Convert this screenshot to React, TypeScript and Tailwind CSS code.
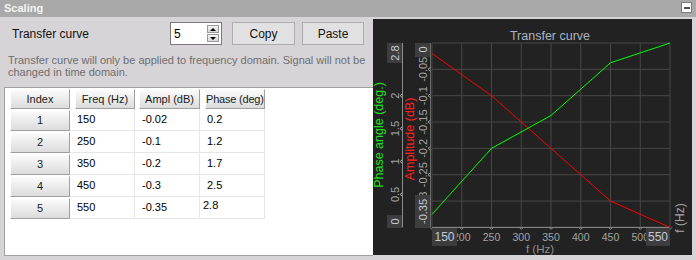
import React from "react";

const rows = [
  { i: 1, f: "150", a: "-0.02", p: "0.2" },
  { i: 2, f: "250", a: "-0.1", p: "1.2" },
  { i: 3, f: "350", a: "-0.2", p: "1.7" },
  { i: 4, f: "450", a: "-0.3", p: "2.5" },
  { i: 5, f: "550", a: "-0.35", p: "2.8" },
];

const freqs = [150, 250, 350, 450, 550];
const ampl = [-0.02, -0.1, -0.2, -0.3, -0.35];
const phase = [0.2, 1.2, 1.7, 2.5, 2.8];

// chart mapping (svg coords, panel origin at page 373,19)
const fx = (f: number) => 59 + (f - 150) * 0.595;
const ya = (a: number) => 24 + (-a / 0.35) * 184.4;
const yp = (p: number) => 208.4 - (p / 2.8) * 184.4;

function VText({ x, y, children, fill, size = 11 }: { x: number; y: number; children: React.ReactNode; fill: string; size?: number }) {
  return (
    <text
      x={0}
      y={0}
      transform={`translate(${x} ${y}) rotate(-90)`}
      textAnchor="middle"
      dominantBaseline="central"
      fill={fill}
      fontSize={size}
    >
      {children}
    </text>
  );
}

function Chart() {
  const gridX = [150, 200, 250, 300, 350, 400, 450, 500, 550];
  const gridY = [0, -0.05, -0.1, -0.15, -0.2, -0.25, -0.3, -0.35];
  const red = freqs.map((f, i) => `${fx(f)},${ya(ampl[i])}`).join(" ");
  const green = freqs.map((f, i) => `${fx(f)},${yp(phase[i])}`).join(" ");
  const label = "#a4a4a4";
  const boxText = "#c4ccd8";
  const box = "#3d3d3d";

  return (
    <svg width={319} height={236} className="block font-['Liberation_Sans',sans-serif]">
      <rect width={319} height={236} fill="#222222" />
      <text x={177} y={17} textAnchor="middle" dominantBaseline="central" fill="#aab4c4" fontSize={12.5}>
        Transfer curve
      </text>

      {/* grid */}
      {gridX.map((f) => (
        <g key={f}>
          <line x1={fx(f)} x2={fx(f)} y1={24} y2={208.4} stroke="#474747" />
          <path d={`M${fx(f) - 2},208.4 L${fx(f)},210.5 L${fx(f) + 2},208.4`} stroke="#8a8a8a" fill="none" />
        </g>
      ))}
      {gridY.map((a) => (
        <line key={a} x1={59} x2={297} y1={ya(a)} y2={ya(a)} stroke="#474747" />
      ))}

      {/* axis lines */}
      <line x1={29.5} x2={29.5} y1={24} y2={208.4} stroke="#8c8c8c" />
      <line x1={57.5} x2={57.5} y1={24} y2={208.4} stroke="#6a6a6a" />
      <line x1={59} x2={297} y1={208.4} y2={208.4} stroke="#8c8c8c" />
      {[0.5, 1, 1.5, 2].map((p) => (
        <path key={p} d={`M29.5,${yp(p) - 2} L27,${yp(p)} L29.5,${yp(p) + 2}`} stroke="#a0a0a0" fill="none" />
      ))}
      {[-0.05, -0.1, -0.15, -0.2, -0.25, -0.3].map((a) => (
        <path key={a} d={`M57.5,${ya(a) - 2} L55,${ya(a)} L57.5,${ya(a) + 2}`} stroke="#a0a0a0" fill="none" />
      ))}

      {/* phase axis labels */}
      <VText x={6} y={116} fill="#1ee01e" size={12.5}>
        Phase angle (deg.)
      </VText>
      {[
        [0.5, "0.5"],
        [1, "1"],
        [1.5, "1.5"],
        [2, "2"],
      ].map(([p, t]) => (
        <VText key={t as string} x={22} y={yp(p as number)} fill={label}>
          {t}
        </VText>
      ))}
      <rect x={14} y={24} width={15} height={20} fill={box} />
      <VText x={22} y={34} fill={boxText}>
        2.8
      </VText>
      <rect x={14} y={196} width={15} height={13} fill={box} />
      <VText x={22} y={202.5} fill={boxText}>
        0
      </VText>

      {/* amplitude axis labels */}
      <VText x={37} y={120} fill="#ff2020" size={12.5}>
        Amplitude (dB)
      </VText>
      {[
        [-0.05, "-0.05"],
        [-0.1, "-0.1"],
        [-0.15, "-0.15"],
        [-0.2, "-0.2"],
        [-0.25, "-0.25"],
        [-0.3, "-0.3"],
      ].map(([a, t]) => (
        <VText key={t as string} x={50} y={ya(a as number)} fill={label}>
          {t}
        </VText>
      ))}
      <rect x={42} y={24} width={15} height={14} fill={box} />
      <VText x={50} y={30.5} fill={boxText}>
        0
      </VText>
      <rect x={42} y={176} width={15} height={33} fill={box} />
      <VText x={50} y={192.5} fill={boxText}>
        -0.35
      </VText>

      {/* x axis labels */}
      {gridX.slice(1, -1).map((f) => (
        <text key={f} x={fx(f)} y={217.5} textAnchor="middle" dominantBaseline="central" fill={label} fontSize={10.5}>
          {f}
        </text>
      ))}
      <rect x={59} y={209} width={25} height={18} fill={box} />
      <text x={71.5} y={218} textAnchor="middle" dominantBaseline="central" fill={boxText} fontSize={12}>
        150
      </text>
      <rect x={273} y={209} width={24} height={18} fill={box} />
      <text x={285} y={218} textAnchor="middle" dominantBaseline="central" fill={boxText} fontSize={12}>
        550
      </text>
      <text x={167} y={230} textAnchor="middle" dominantBaseline="central" fill="#8e8e8e" fontSize={11.5}>
        f (Hz)
      </text>
      <VText x={307} y={199} fill="#a4a4a4" size={12}>
        f (Hz)
      </VText>

      {/* curves */}
      <polyline points={red} fill="none" stroke="#ff0000" strokeWidth={1} />
      <polyline points={green} fill="none" stroke="#00ff00" strokeWidth={1} />
    </svg>
  );
}

function HeadBtn({ children, className = "" }: { children: React.ReactNode; className?: string }) {
  return (
    <div
      className={`flex items-center justify-center overflow-hidden whitespace-nowrap bg-linear-to-b from-[#fbfbfb] to-[#dcdcdc] border-t border-l border-t-white border-l-white border-r border-b border-r-[#a0a0a0] border-b-[#a0a0a0] text-[#1a1a1a] ${className}`}
    >
      {children}
    </div>
  );
}

export default function App() {
  return (
    <div className="w-[696px] h-[260px] overflow-hidden bg-[#d7d4d8] font-['Liberation_Sans',sans-serif] text-[11px] text-black">
      {/* title bar */}
      <div className="h-[17px] bg-[#a9a9a9] flex items-center justify-between pl-1 pr-[4px]">
        <span className="font-bold text-[#f4f4f4] text-[11px]">Scaling</span>
        <div className="w-[11px] h-[11px] mb-[2px] bg-white border border-[#7c7c7c] flex items-center justify-center">
          <div className="w-[6px] h-[2px] bg-[#505050]" />
        </div>
      </div>

      <div className="flex h-[243px]">
        {/* left side */}
        <div className="w-[373px] flex flex-col">
          <div className="flex items-center h-[23px] mt-[5px]">
            <span className="ml-[12px] w-[158px] text-[12px] text-[#111]">Transfer curve</span>
            <div className="w-[52px] h-[23px] bg-white border border-[#7a7a7a] flex items-center justify-between pl-[3px] pr-[2px]">
              <span className="text-[12px]">5</span>
              <div className="flex flex-col gap-px">
                <div className="w-[12px] h-[8px] bg-linear-to-b from-[#f4f4f4] to-[#d8d8d8] border border-[#9a9a9a] flex items-center justify-center">
                  <div className="w-0 h-0 border-l-[3px] border-r-[3px] border-b-[3px] border-l-transparent border-r-transparent border-b-black" />
                </div>
                <div className="w-[12px] h-[8px] bg-linear-to-b from-[#f4f4f4] to-[#d8d8d8] border border-[#9a9a9a] flex items-center justify-center">
                  <div className="w-0 h-0 border-l-[3px] border-r-[3px] border-t-[3px] border-l-transparent border-r-transparent border-t-black" />
                </div>
              </div>
            </div>
            <button className="ml-[10px] w-[63px] h-[23px] bg-[#e1e1e1] border border-[#adadad] text-[12px] text-[#111]">Copy</button>
            <button className="ml-[7px] w-[62px] h-[23px] bg-[#e1e1e1] border border-[#adadad] text-[12px] text-[#111]">Paste</button>
          </div>

          <p className="mt-[9px] ml-[8px] w-[362px] leading-[12px] text-[11px] text-[#6e6e6e]">
            Transfer curve will only be applied to frequency domain. Signal will not be changed in time domain.
          </p>

          <div className="mt-[9px] ml-[4px] w-[369px] h-[169px] bg-white border border-r-0 border-[#a0a0a0] pl-[5px] pt-px">
            <div className="flex h-[20px]">
              <HeadBtn className="w-[60px] h-[20px]">Index</HeadBtn>
              <HeadBtn className="ml-[5px] w-[60px] h-[20px]">Freq (Hz)</HeadBtn>
              <HeadBtn className="ml-[4px] w-[61px] h-[20px]">Ampl (dB)</HeadBtn>
              <HeadBtn className="ml-[5px] w-[60px] h-[20px] justify-start tracking-[-0.2px]">Phase (deg)</HeadBtn>
            </div>
            {rows.map((r) => (
              <div key={r.i} className="flex h-[22px]">
                <div className="w-[60px] pt-px">
                  <HeadBtn className="w-[60px] h-[21px]">{r.i}</HeadBtn>
                </div>
                <div className="w-[65px] pl-[7px] flex items-center border-r border-b border-[#e6e6e6]">{r.f}</div>
                <div className="w-[65px] pl-[7px] flex items-center border-r border-b border-[#e6e6e6]">{r.a}</div>
                <div className="w-[65px] flex items-center border-r border-b border-[#e6e6e6]">
                  {r.i === 5 ? (
                    <span className="pl-[3px] -translate-y-[2px]">{r.p}</span>
                  ) : (
                    <span className="pl-[7px]">{r.p}</span>
                  )}
                </div>
              </div>
            ))}
          </div>
        </div>

        {/* chart */}
        <div className="mt-[2px] w-[319px] h-[236px]">
          <Chart />
        </div>
      </div>
    </div>
  );
}
